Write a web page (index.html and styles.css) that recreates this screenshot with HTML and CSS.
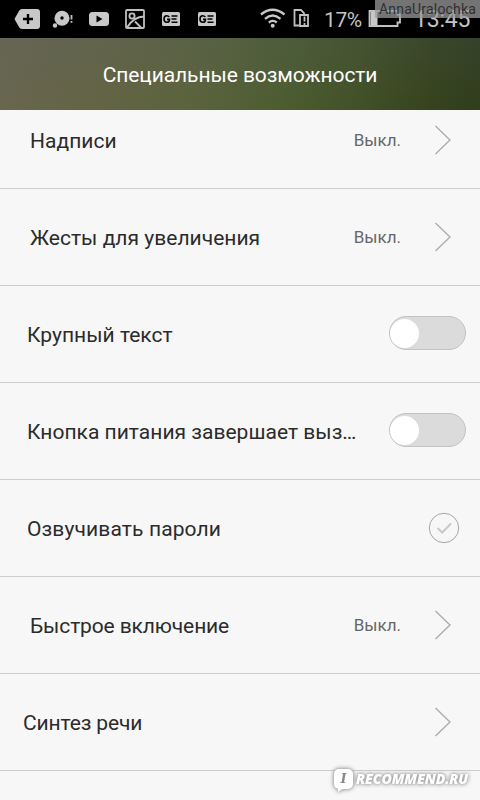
FILE: index.html
```html
<!DOCTYPE html>
<html lang="ru">
<head>
<meta charset="utf-8">
<title>Специальные возможности</title>
<link rel="stylesheet" href="styles.css">
</head>
<body>
<div class="screen">
  <div class="status">
    <div class="notifications">
      <svg viewBox="0 0 36 38"><path class="fill" d="M13 9h15q3 0 3 3v14q0 3-3 3H13q-2 0-3-2L6 20q-.7-1 0-2l4-7q1-2 3-2z"/><path class="cut" d="M19 14v10M14 19h10"/></svg>
      <svg viewBox="0 0 36 38"><circle class="fill" cx="17" cy="18.3" r="7.5"/><circle class="dark" cx="17" cy="18" r="1.7"/><circle class="fill" cx="10" cy="25.5" r="2.2"/><path class="line" d="M26.500 15v4.500M26.500 21v1.800"/></svg>
      <svg viewBox="0 0 36 38"><rect class="fill" x="8" y="12" width="20" height="14" rx="3.5"/><path class="dark" d="M15.500 15.500v7l6-3.500z"/></svg>
      <svg viewBox="0 0 36 38"><rect class="line" x="9" y="10" width="18" height="18" rx="1"/><circle class="line" cx="15" cy="16" r="2.6"/><path class="line" d="M10 27.500C14 21 20 16.500 27 16.500M18 21.500l6 6"/></svg>
      <svg viewBox="0 0 36 38"><rect class="fill" x="9" y="12" width="18" height="14" rx="1.500"/><path class="cut thin" d="M16.300 17q-1-1.300-2.600-1.300-2.700 0-2.700 3.300t2.800 3.300q2.700 0 2.700-2.900H14M18.500 16h6M18.500 19h5M18.500 22.200h6"/></svg>
      <svg viewBox="0 0 36 38"><rect class="fill" x="9" y="12" width="18" height="14" rx="1.500"/><path class="cut thin" d="M16.300 17q-1-1.300-2.600-1.300-2.700 0-2.700 3.300t2.800 3.300q2.700 0 2.700-2.900H14M18.500 16h6M18.500 19h5M18.500 22.200h6"/></svg>
    </div>
    <svg class="wifi" viewBox="0 0 26 38"><path class="wave" d="M1 14.500q11.500-9.500 23.500 0M5 18.800q7.500-6.500 15.500 0M8.800 22.500q4-3.300 8 0"/><circle class="fill" cx="12.700" cy="25.800" r="2"/></svg>
    <svg class="sim" viewBox="0 0 16 38"><path class="line" d="M6 25.500H1.500V10H8l3 3v2"/><path class="line" d="M7 15h8v11H7z"/><path class="line" d="M11.500 16.500v5M11.500 23v2"/></svg>
    <span class="percent">17%</span>
    <svg class="battery" viewBox="0 0 34 38"><path class="line" d="M1.500 11h28v3.500h2.500v8h-2.500V26h-28z"/><rect class="fill" x="2.500" y="12" width="7" height="13"/></svg>
    <span class="clock">13:45</span>
    <div class="author">AnnaUralochka</div>
  </div>
  <header class="header"><h1>Специальные возможности</h1></header>
  <main class="viewport">
    <ul class="list">
      <li class="row inset"><span class="label">Надписи</span><span class="value">Выкл.</span><svg class="chevron" viewBox="0 0 18 30"><path d="M1.500 1 16 15 1.500 29"/></svg></li>
      <li class="row inset"><span class="label">Жесты для увеличения</span><span class="value">Выкл.</span><svg class="chevron" viewBox="0 0 18 30"><path d="M1.500 1 16 15 1.500 29"/></svg></li>
      <li class="row control"><span class="label">Крупный текст</span><span class="switch"></span></li>
      <li class="row control"><span class="label">Кнопка питания завершает выз…</span><span class="switch"></span></li>
      <li class="row control"><span class="label wide">Озвучивать пароли</span><svg class="check" viewBox="0 0 32 32"><circle cx="16" cy="16" r="14.700"/><path d="m9.500 16 4.700 4.500 8.800-9"/></svg></li>
      <li class="row inset"><span class="label tight">Быстрое включение</span><span class="value">Выкл.</span><svg class="chevron" viewBox="0 0 18 30"><path d="M1.500 1 16 15 1.500 29"/></svg></li>
      <li class="row outset"><span class="label tight">Синтез речи</span><svg class="chevron" viewBox="0 0 18 30"><path d="M1.500 1 16 15 1.500 29"/></svg></li>
    </ul>
  </main>
  <div class="brand">
    <span class="bubble">I</span><span class="brand-name">RECOMMEND.RU</span>
  </div>
</div>
</body>
</html>
```

FILE: styles.css
```css
* { box-sizing: border-box; }

body {
  margin: 0;
  font-family: Roboto, "Liberation Sans", sans-serif;
}

.screen {
  position: relative;
  display: flex;
  flex-direction: column;
  width: 480px;
  height: 800px;
  overflow: hidden;
  background: #f7f7f7;
}

.status {
  position: relative;
  display: flex;
  align-items: center;
  flex: none;
  height: 38px;
  background: #000;
  color: #c4c4c4;
}

.status svg { flex: none; height: 38px; }
.notifications { display: flex; width: 251px; padding-left: 9px; margin-right: 9px; }
.notifications svg { width: 36px; }
.fill { fill: #c8c8c8; }
.dark { fill: #000; }
.cut { fill: none; stroke: #000; stroke-width: 2.4; }
.thin { stroke-width: 1.6; }
.line { fill: none; stroke: #c0c0c0; stroke-width: 1.8; }
.wave { fill: none; stroke: #c8c8c8; stroke-width: 2.3; }
.wifi { width: 26px; }
.sim { width: 16px; margin-left: 7px; }
.percent { width: 44px; margin-left: 15px; padding-top: 2px; font-size: 21px; line-height: 38px; letter-spacing: -.4px; }
.battery { width: 34px; }
.clock { margin-left: 12px; padding-top: 2px; font-size: 23px; line-height: 38px; letter-spacing: -.2px; white-space: nowrap; }

.author {
  position: absolute;
  top: 0;
  right: 0;
  width: 105px;
  height: 18px;
  padding-left: 4px;
  background: rgba(155, 155, 155, .75);
  color: #303030;
  font-size: 14px;
  line-height: 19px;
  letter-spacing: .2px;
}

.header {
  display: flex;
  flex: none;
  align-items: center;
  justify-content: center;
  height: 72px;
  background:
    linear-gradient(180deg, rgba(80, 90, 90, .2), rgba(75, 90, 0, .08)),
    linear-gradient(94deg, #6b6855 0%, #656548 22%, #5d6441 40%, #4d5d34 59%, #415029 75%, #34411f 90%, #2e3b1d 100%);
}

.header h1 {
  margin: 1px 0 0;
  color: #fff;
  font-size: 21px;
  font-weight: 400;
  line-height: 28px;
  letter-spacing: -.08px;
}

.viewport { flex: 1; overflow: hidden; }
.list { margin: -18px 0 0; padding: 0; list-style: none; }

.row {
  display: flex;
  align-items: center;
  height: 97px;
  border-bottom: 1px solid #cdcdcd;
}

.inset { padding: 0 28px 0 30px; }
.control { padding: 0 14px 0 27px; }
.outset { padding: 0 28px 0 23px; }

.label {
  flex: 1;
  padding-top: 2px;
  color: #2b2b2b;
  font-size: 21px;
  line-height: 28px;
  letter-spacing: .02px;
  white-space: nowrap;
}

.tight { letter-spacing: -.13px; }
.wide { letter-spacing: .13px; }

.value { margin-right: 33px; color: #666; font-size: 17px; line-height: 28px; }

.chevron { width: 18px; height: 30px; flex: none; }
.chevron path { fill: none; stroke: #adadad; stroke-width: 1.4; }

.switch {
  display: flex;
  align-items: center;
  flex: none;
  width: 77px;
  height: 34px;
  margin-bottom: 2px;
  padding-left: 0;
  border: 1px solid #c3c3c3;
  border-radius: 17px;
  background: #dbdbdb;
}

.switch::before {
  width: 29px;
  height: 29px;
  border-radius: 50%;
  background: #fff;
  content: "";
}

.check { width: 32px; height: 32px; margin-right: 6px; flex: none; fill: none; }
.check circle { stroke: #a5a5a5; stroke-width: 1; }
.check path { stroke: #c9c9c9; stroke-width: 2; }

.brand {
  position: absolute;
  left: 334px;
  top: 769px;
  display: flex;
  align-items: center;
  color: #fff;
  filter: drop-shadow(0 0 2px #999) drop-shadow(0 0 1px #bbb);
}

.bubble {
  position: relative;
  width: 19px;
  height: 20px;
  border-radius: 5px;
  background: #fff;
  color: #888;
  font: italic 700 13px/20px "DejaVu Serif", serif;
  text-align: center;
}

.bubble::after {
  position: absolute;
  left: 4px;
  top: 19px;
  border-top: 4px solid #fff;
  border-right: 6px solid transparent;
  content: "";
}

.brand-name {
  margin-left: 3px;
  font: italic 800 14px/18px "Open Sans", sans-serif;
  letter-spacing: -.1px;
  white-space: nowrap;
}
```
